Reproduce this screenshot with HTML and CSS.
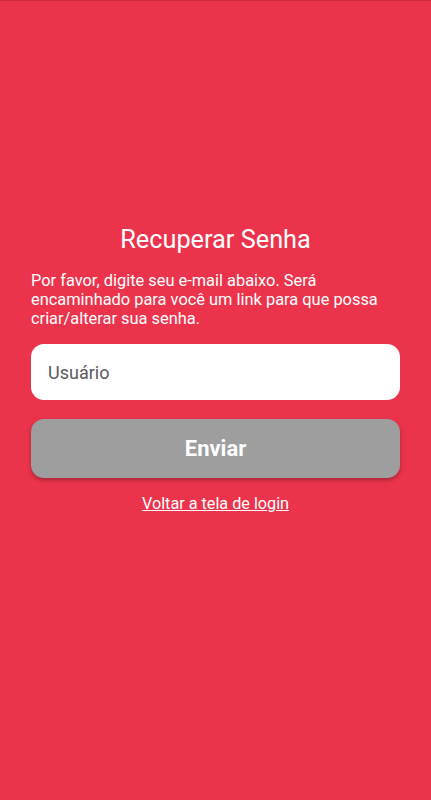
FILE: index.html
```html
<!DOCTYPE html>
<html lang="pt-BR">
<head>
    <meta charset="UTF-8">
    <meta name="viewport" content="width=device-width, initial-scale=1.0">
    <title>Recuperar Senha</title>
    <link rel="stylesheet" href="styles.css">
</head>
<body>
    <div class="container">
        <h1 class="title">Recuperar Senha</h1>
        <p class="info">Por favor, digite seu e-mail abaixo. Será encaminhado para você um link para que possa criar/alterar sua senha.</p>
        <form class="form">
            <input type="text" class="field" placeholder="Usuário">
            <button type="submit" class="send">Enviar</button>
        </form>
        <a href="#" class="back">Voltar a tela de login</a>
    </div>
</body>
</html>
```

FILE: styles.css
```css
body {
    font-family: Roboto, "Liberation Sans", sans-serif;
    background-color: #eb344c;
    margin: 0;
    padding: 0;
    height: 100vh;
    border-top: 1px solid #c92a40;
    box-sizing: border-box;
}

.container {
    padding: 223px 31px 0;
    display: flex;
    flex-direction: column;
}

.title {
    margin: 0;
    text-align: center;
    color: #fff;
    font-size: 25.3px;
    font-weight: 400;
    line-height: 32px;
}

.info {
    margin: 15px 0 0;
    color: #fff;
    font-size: 16.4px;
    line-height: 19px;
}

.form {
    display: flex;
    flex-direction: column;
    gap: 19px;
    margin-top: 16px;
}

.field {
    height: 56px;
    padding: 0 17px;
    font-family: inherit;
    font-size: 18px;
    color: #333;
    background-color: #fff;
    border: none;
    border-radius: 13px;
    width: 100%;
    box-sizing: border-box;
}

.field::placeholder {
    color: #5a5a5a;
}

.field:focus {
    outline: none;
}

.send {
    height: 59px;
    font-family: inherit;
    font-size: 22px;
    font-weight: 700;
    color: #fff;
    background-color: #9e9e9e;
    border: none;
    border-radius: 13px;
    box-shadow: 0 2px 4px rgba(0, 0, 0, 0.3);
    cursor: pointer;
}

.back {
    align-self: center;
    margin-top: 16px;
    color: #fff;
    font-size: 16.2px;
    line-height: 20px;
}
```
